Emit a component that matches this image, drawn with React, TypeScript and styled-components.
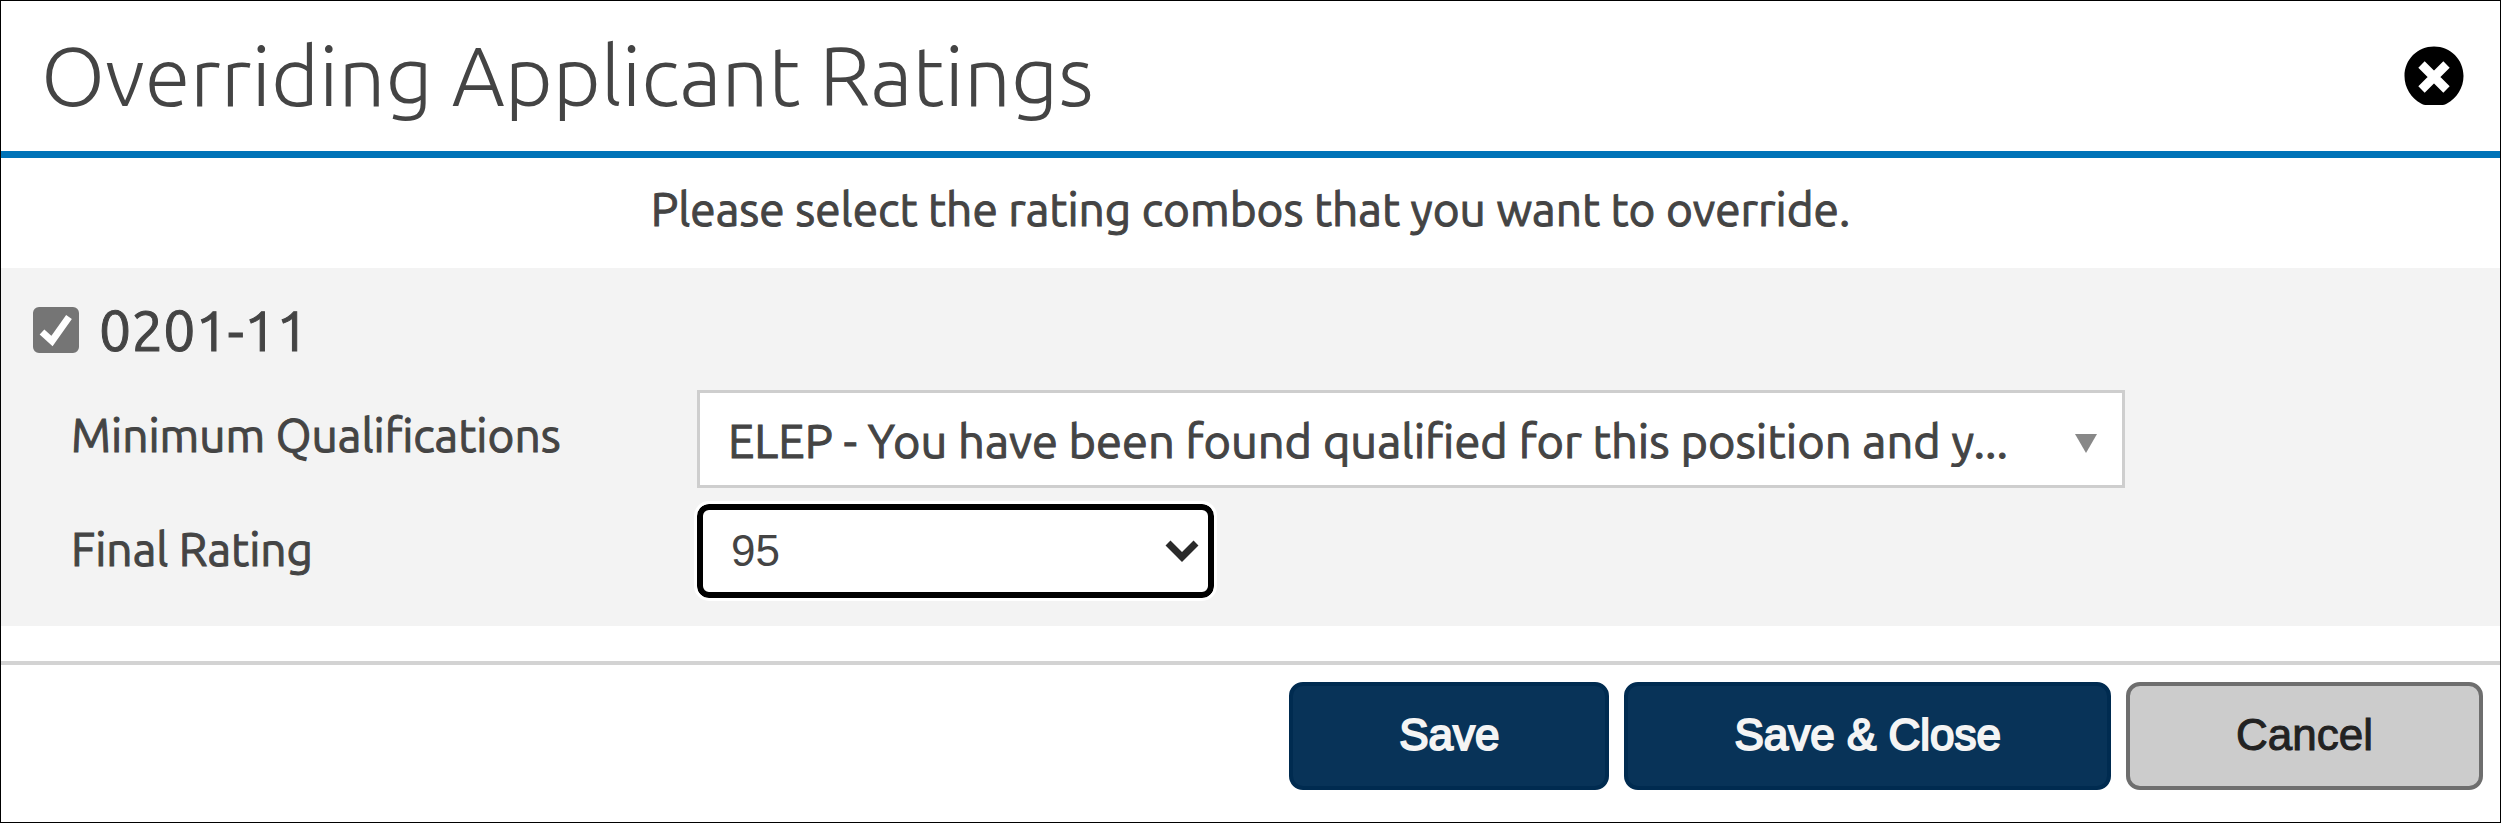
import React, { useState } from 'react';
import styled, { createGlobalStyle } from 'styled-components';

const GlobalStyle = createGlobalStyle`
  *, *::before, *::after { box-sizing: border-box; }
  html, body, #root { height: 100%; }
  body {
    margin: 0;
    background: #fff;
    color: #444;
    font-family: Ubuntu, 'Open Sans', 'Noto Sans', sans-serif;
  }
`;

const Dialog = styled.form`
  display: flex;
  flex-direction: column;
  min-height: 100%;
  border: 1px solid #000;
  background: #fff;
`;

const Header = styled.header`
  display: flex;
  align-items: center;
  justify-content: space-between;
  padding: 24px 36px 24px 40px;
  border-bottom: 7px solid #0073b8;
`;

const Title = styled.h1`
  margin: 0;
  font-size: 83px;
  font-weight: 300;
  line-height: 102px;
`;

const CloseButton = styled.button`
  display: flex;
  padding: 0;
  border: 0;
  background: none;
  cursor: pointer;
`;

const Instructions = styled.p`
  margin: 0;
  padding: 24px 0 32px;
  font-size: 46px;
  line-height: 54px;
  text-align: center;
  -webkit-text-stroke: 1px #444;
`;

const RatingPanel = styled.fieldset`
  min-width: 0;
  margin: 0;
  padding: 28px 32px;
  border: 0;
  background: #f3f3f3;
`;

const ComboLabel = styled.label`
  display: flex;
  align-items: center;
  gap: 20px;
  font-size: 57px;
  line-height: 68px;
  -webkit-text-stroke: 1px #444;
`;

const CheckSlot = styled.span`
  display: grid;

  > * { grid-area: 1 / 1; }
  > svg { pointer-events: none; }
`;

const CheckBox = styled.input`
  appearance: none;
  width: 46px;
  height: 46px;
  margin: 0;
  border: 3px solid #757575;
  border-radius: 6px;
  background: #fff;

  &:checked { background: #757575; }
`;

const Fields = styled.div`
  display: grid;
  grid-template-columns: 626px minmax(0, 1fr);
  row-gap: 16px;
  padding-top: 26px;
  padding-left: 38px;
`;

const FieldLabel = styled.label`
  padding-top: 18px;
  font-size: 46px;
  line-height: 54px;
  -webkit-text-stroke: 1px #444;
`;

const SelectSlot = styled.div<{ $width: string }>`
  display: grid;
  align-items: center;
  width: ${(p) => p.$width};
  max-width: 100%;

  > * { grid-area: 1 / 1; }
  > svg { justify-self: end; pointer-events: none; }
`;

const Select = styled.select`
  appearance: none;
  width: 100%;
  height: 98px;
  padding: 2px 100px 0 28px;
  border: 3px solid #cecece;
  border-radius: 0;
  background: #fff;
  color: #444;
  font-family: inherit;
  font-size: 47px;
  text-overflow: ellipsis;
  -webkit-text-stroke: 1px #444;
`;

const RatingSelect = styled(Select)`
  height: 94px;
  padding: 0 60px 2px 28px;
  border: 6px solid #000;
  border-radius: 12px;
  outline: 3px solid #fff;
  font-family: 'Liberation Sans', Arial, sans-serif;
  font-size: 44px;
  -webkit-text-stroke: 0;
`;

const TriangleIcon = styled.svg`
  width: 22px;
  height: 19px;
  margin-top: 8px;
  margin-right: 28px;
  fill: #888;
`;

const ChevronIcon = styled.svg`
  width: 36px;
  height: 26px;
  margin-right: 14px;
  fill: none;
  stroke: #2a2a2a;
  stroke-width: 7;
`;

const Footer = styled.footer`
  display: flex;
  justify-content: flex-end;
  gap: 15px;
  margin-top: 35px;
  padding: 17px 17px 28px;
  border-top: 4px solid #d3d3d3;
`;

const Button = styled.button<{ $primary?: boolean }>`
  height: 108px;
  padding: 0 106px 2px;
  border: 4px solid ${(p) => (p.$primary ? '#002b50' : '#6e6e6e')};
  border-radius: 14px;
  background: ${(p) => (p.$primary ? '#083358' : '#ccc')};
  color: ${(p) => (p.$primary ? '#f4f4f4' : '#222')};
  font-family: 'Liberation Sans', Arial, sans-serif;
  font-size: 44px;
  line-height: 50px;
  -webkit-text-stroke: ${(p) => (p.$primary ? '2px #f4f4f4' : '1px #222')};
  cursor: pointer;
`;

export default function App() {
  const [checked, setChecked] = useState(true);

  return (
    <>
      <GlobalStyle />
      <Dialog onSubmit={(e) => e.preventDefault()}>
        <Header>
          <Title>Overriding Applicant Ratings</Title>
          <CloseButton type="button" aria-label="Close">
            <svg width="60" height="60" viewBox="0 0 60 60" aria-hidden="true">
              <path d="M30 0.5C46.5 0.5 59.5 13.5 59.5 30C59.5 41.5 53 52 43 57.5C41 58.8 39.5 59 37 59H23C20.5 59 19 58.8 17 57.5C7 52 0.5 41.5 0.5 30C0.5 13.5 13.5 0.5 30 0.5Z" fill="#000" />
              <path d="M17.5 18.5L42.5 43.5M42.5 18.5L17.5 43.5" stroke="#fff" strokeWidth="9" />
            </svg>
          </CloseButton>
        </Header>
        <Instructions>Please select the rating combos that you want to override.</Instructions>
        <RatingPanel>
          <ComboLabel>
            <CheckSlot>
              <CheckBox type="checkbox" checked={checked} onChange={(e) => setChecked(e.target.checked)} />
              {checked && (
                <svg width="46" height="46" viewBox="0 0 46 46" aria-hidden="true">
                  <path d="M9 25L19 34L36 10" fill="none" stroke="#fff" strokeWidth="7" />
                </svg>
              )}
            </CheckSlot>
            0201-11
          </ComboLabel>
          <Fields>
            <FieldLabel htmlFor="min-qual">Minimum Qualifications</FieldLabel>
            <SelectSlot $width="1428px">
              <Select id="min-qual">
                <option>ELEP - You have been found qualified for this position and y...</option>
              </Select>
              <TriangleIcon viewBox="0 0 22 19" aria-hidden="true">
                <path d="M0 0H22L11 19Z" />
              </TriangleIcon>
            </SelectSlot>
            <FieldLabel htmlFor="final-rating">Final Rating</FieldLabel>
            <SelectSlot $width="517px">
              <RatingSelect id="final-rating">
                <option>95</option>
              </RatingSelect>
              <ChevronIcon viewBox="0 0 36 26" aria-hidden="true">
                <path d="M4 5L18 19L32 5" />
              </ChevronIcon>
            </SelectSlot>
          </Fields>
        </RatingPanel>
        <Footer>
          <Button type="submit" $primary>Save</Button>
          <Button type="submit" $primary>Save &amp; Close</Button>
          <Button type="button">Cancel</Button>
        </Footer>
      </Dialog>
    </>
  );
}
